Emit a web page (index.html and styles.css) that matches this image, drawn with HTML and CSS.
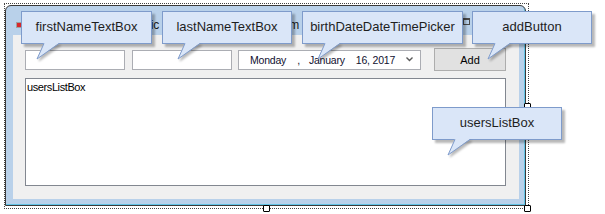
FILE: index.html
```html
<!DOCTYPE html>
<html lang="en">
<head>
    <meta charset="UTF-8">
    <title>Form designer</title>
    <link rel="stylesheet" href="styles.css">
</head>
<body>
<div class="stage">
    <div class="selection">
        <div class="window">
            <div class="titlebar">
                <span class="appicon"></span>
                <span class="caption">Basic</span>
                <span class="caption second-word">Form</span>
                <span class="maxbtn"></span>
            </div>
            <div class="client">
                <div class="row">
                    <div class="textbox"></div>
                    <div class="textbox second"></div>
                    <div class="datepicker">
                        <span class="d-day">Monday</span>
                        <span class="d-comma">,</span>
                        <span class="d-month">January</span>
                        <span class="d-num">16, 2017</span>
                        <svg class="d-arrow" width="7" height="5" viewBox="0 0 7 5">
                            <polyline points="0.5,0.5 3.5,3.5 6.5,0.5" fill="none" stroke="#5a5a5a" stroke-width="1.4"/>
                        </svg>
                    </div>
                    <div class="button">Add</div>
                </div>
                <div class="listbox">usersListBox</div>
            </div>
        </div>
        <span class="handle h-right"></span>
        <span class="handle h-bottom"></span>
        <span class="handle h-corner"></span>
    </div>

    <!-- callouts over the designer -->
    <div class="callout c-first">firstNameTextBox
        <svg class="tail" width="44" height="22" viewBox="0 0 44 22">
            <polygon points="23,0 38,0 16,16" fill="#dae6f8"/>
            <polyline points="23,0.5 16,16 38,0.5" fill="none" stroke="#7e9bcb" stroke-width="1"/>
        </svg>
    </div>
    <div class="callout c-last">lastNameTextBox
        <svg class="tail" width="44" height="22" viewBox="0 0 44 22">
            <polygon points="23,0 38,0 16,16" fill="#dae6f8"/>
            <polyline points="23,0.5 16,16 38,0.5" fill="none" stroke="#7e9bcb" stroke-width="1"/>
        </svg>
    </div>
    <div class="callout c-birth">birthDateDateTimePicker
        <svg class="tail" width="44" height="22" viewBox="0 0 44 22">
            <polygon points="23,0 38,0 16,16" fill="#dae6f8"/>
            <polyline points="23,0.5 16,16 38,0.5" fill="none" stroke="#7e9bcb" stroke-width="1"/>
        </svg>
    </div>
    <div class="callout c-add">addButton
        <svg class="tail" width="44" height="22" viewBox="0 0 44 22">
            <polygon points="23,0 38,0 16,16" fill="#dae6f8"/>
            <polyline points="23,0.5 16,16 38,0.5" fill="none" stroke="#7e9bcb" stroke-width="1"/>
        </svg>
    </div>
    <div class="callout c-users">usersListBox
        <svg class="tail" width="44" height="22" viewBox="0 0 44 22">
            <polygon points="23,0 38,0 16,16" fill="#dae6f8"/>
            <polyline points="23,0.5 16,16 38,0.5" fill="none" stroke="#7e9bcb" stroke-width="1"/>
        </svg>
    </div>
</div>
</body>
</html>
```

FILE: styles.css
```css
body {
    margin: 0;
    background-color: #ffffff;
    font-family: "Liberation Sans", Arial, sans-serif;
}

.stage {
    position: relative;
    width: 605px;
    height: 214px;
    overflow: hidden;
    padding: 3px 0 0 4px;
    box-sizing: border-box;
}

.selection {
    position: relative;
    display: inline-block;
    border: 1px dotted #444444;
    padding: 1px 2px 2px 0;
}

.window {
    width: 521px;
    height: 201px;
    box-sizing: border-box;
    display: flex;
    flex-direction: column;
    background-color: #b9d1ea;
    border: 1px solid #3a3a3a;
    border-radius: 6px 6px 0 0;
    box-shadow: inset -1px -1px 0 #62c4e6;
    padding: 0 6px 6px 7px;
}

.titlebar {
    height: 29px;
    display: flex;
    align-items: center;
    padding-top: 8px;
    box-sizing: border-box;
    white-space: nowrap;
}

.appicon {
    width: 4px;
    height: 4px;
    margin-left: 3px;
    background-color: #d8262a;
    border: 1px solid #a0a0a0;
}

.caption {
    margin-left: 108px;
    font-size: 12px;
    color: #1a1a1a;
}

.second-word {
    margin-left: 112px;
}

.maxbtn {
    margin-left: auto;
    margin-right: 49px;
    align-self: flex-start;
    margin-top: 4px;
    width: 5px;
    height: 4px;
    border: 1px solid #4a4a4a;
    border-top-width: 2px;
}

.client {
    flex: 1;
    background-color: #f0f0f0;
    padding: 13px 0 0 12px;
}

.row {
    display: flex;
    align-items: center;
    height: 23px;
}

.textbox {
    width: 100px;
    height: 20px;
    box-sizing: border-box;
    background-color: #ffffff;
    border: 1px solid #abadb3;
}

.second {
    margin-left: 7px;
}

.datepicker {
    width: 183px;
    height: 20px;
    box-sizing: border-box;
    margin-left: 6px;
    background-color: #ffffff;
    border: 1px solid #abadb3;
    display: flex;
    align-items: center;
    font-size: 10.5px;
    letter-spacing: -0.2px;
    white-space: nowrap;
    color: #101030;
    padding-left: 11px;
}

.d-comma {
    margin-left: 11px;
}

.d-month {
    margin-left: 9px;
}

.d-num {
    margin-left: 11px;
}

.d-arrow {
    margin-left: 11px;
}

.button {
    width: 72px;
    height: 23px;
    box-sizing: border-box;
    margin-left: 13px;
    background-color: #e1e1e1;
    border: 1px solid #adadad;
    font-size: 11px;
    color: #000000;
    display: flex;
    align-items: center;
    justify-content: center;
}

.listbox {
    width: 481px;
    height: 108px;
    box-sizing: border-box;
    margin-top: 7px;
    background-color: #ffffff;
    border: 1px solid #828790;
    font-size: 11px;
    letter-spacing: -0.4px;
    color: #000000;
    padding: 2px 1px;
}

.handle {
    position: absolute;
    width: 5px;
    height: 5px;
    background-color: #ffffff;
    border: 1px solid #000000;
    border-radius: 1px;
}

.h-right {
    left: 519px;
    top: 99px;
}

.h-bottom {
    left: 258px;
    top: 201px;
}

.h-corner {
    left: 519px;
    top: 201px;
}

.callout {
    position: absolute;
    top: 11px;
    height: 33px;
    box-sizing: border-box;
    background-color: #dae6f8;
    border: 1px solid #7e9bcb;
    box-shadow: 3px 3px 2px rgba(0, 0, 0, 0.28);
    font-size: 13px;
    color: #1e1e1e;
    text-align: center;
    line-height: 29px;
}

.tail {
    position: absolute;
    left: -1px;
    top: 31px;
    overflow: visible;
    filter: drop-shadow(2px 2px 1px rgba(0, 0, 0, 0.28));
}

.c-first {
    left: 21px;
    width: 131px;
}

.c-last {
    left: 162px;
    width: 130px;
}

.c-birth {
    left: 302px;
    width: 161px;
}

.c-add {
    left: 472px;
    width: 120px;
}

.c-users {
    left: 432px;
    top: 107px;
    width: 130px;
}
```
